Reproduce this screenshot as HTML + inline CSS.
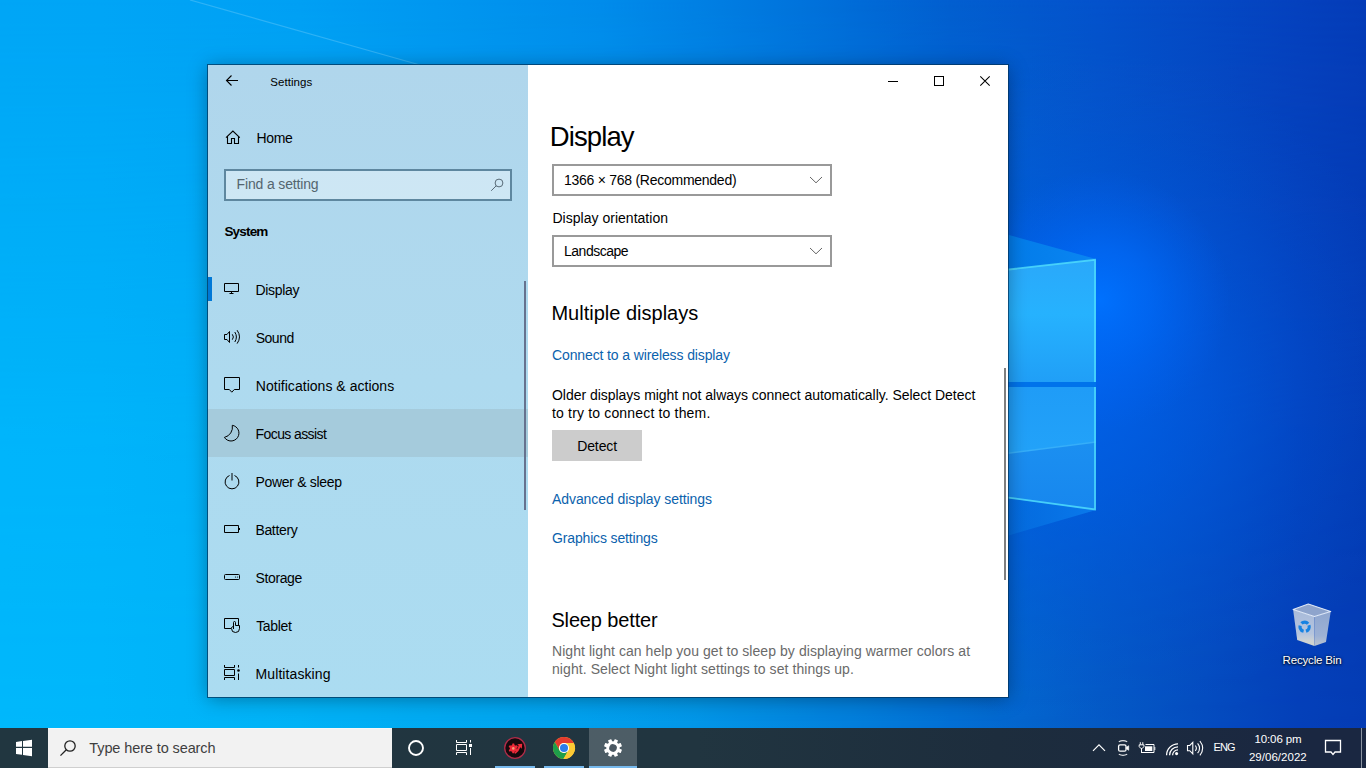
<!DOCTYPE html>
<html lang="en">
<head>
<meta charset="utf-8">
<title>Settings</title>
<style>
*{margin:0;padding:0;box-sizing:border-box}
html,body{width:1366px;height:768px;overflow:hidden;background:#0a6fd8;font-family:"Liberation Sans",sans-serif}
.abs{position:absolute}
.t{position:absolute;white-space:nowrap;display:block}
#wall{position:absolute;left:0;top:0;width:1366px;height:768px}
#win{position:absolute;left:208px;top:65px;width:800px;height:632px;background:#fff;box-shadow:0 0 0 1px rgba(0,50,90,.7),0 2px 18px rgba(0,0,0,.34)}
#side{position:absolute;left:0;top:0;width:320px;height:632px;background:linear-gradient(180deg,#b0d6ec 0%,#aedaef 50%,#abdcf1 100%)}
#hover{position:absolute;left:0;top:344px;width:320px;height:48px;background:#a5cbdc}
#accent{position:absolute;left:0;top:212px;width:4px;height:24px;background:#0078d7}
#sbox{position:absolute;left:16px;top:104px;width:288px;height:32px;border:2px solid #5e879f;background:rgba(255,255,255,.38)}
#sscroll{position:absolute;left:316px;top:216px;width:2px;height:229px;background:#66728e}
#mscroll{position:absolute;left:796px;top:303px;width:2px;height:212px;background:#7f7f7f}
.dd{position:absolute;left:344px;width:280px;height:32px;border:2px solid #999;background:#fff}
#detect{position:absolute;left:344px;top:365px;width:90px;height:31px;background:#ccc}
#taskbar{position:absolute;left:0;top:728px;width:1366px;height:40px;background:linear-gradient(90deg,#213640 0%,#213540 51%,#1d2d3d 73%,#1a2741 96%,#1a2741 100%)}
#tsearch{position:absolute;left:48px;top:0;width:344px;height:40px;background:#f2f2f2;border-top:1px solid #f7f7f7;border-bottom:1px solid #cfcfcf}
#active{position:absolute;left:589px;top:0;width:48px;height:40px;background:rgba(255,255,255,.2)}
.ind{position:absolute;top:38px;height:2px;background:#76b9ed}
svg{position:absolute;overflow:visible}
</style>
</head>
<body>
<!-- wallpaper -->
<svg id="wall" width="1366" height="768" viewBox="0 0 1366 768">
<defs>
<linearGradient id="gt" x1="0" y1="0" x2="1366" y2="0" gradientUnits="userSpaceOnUse">
<stop offset="0" stop-color="#00a6f6"/><stop offset=".073" stop-color="#00a5f6"/><stop offset=".22" stop-color="#00a0f4"/><stop offset=".44" stop-color="#008ceb"/><stop offset=".586" stop-color="#0073dc"/><stop offset=".695" stop-color="#025fd0"/><stop offset=".805" stop-color="#0452cc"/><stop offset=".95" stop-color="#0541be"/><stop offset="1" stop-color="#053cb8"/>
</linearGradient>
<linearGradient id="gbt" x1="0" y1="0" x2="1366" y2="0" gradientUnits="userSpaceOnUse">
<stop offset="0" stop-color="#00b8fb"/><stop offset=".073" stop-color="#00b7fb"/><stop offset=".22" stop-color="#00b2f6"/><stop offset=".4" stop-color="#01a4ee"/><stop offset=".512" stop-color="#0296e6"/><stop offset=".695" stop-color="#0270d4"/><stop offset=".805" stop-color="#045ac6"/><stop offset=".95" stop-color="#0440b9"/><stop offset="1" stop-color="#043cb4"/>
</linearGradient>
<linearGradient id="gvm" x1="0" y1="0" x2="0" y2="768" gradientUnits="userSpaceOnUse">
<stop offset="0" stop-color="#000"/><stop offset=".55" stop-color="#ccc"/><stop offset="1" stop-color="#fff"/>
</linearGradient>
<mask id="mk"><rect width="1366" height="768" fill="url(#gvm)"/></mask>
<radialGradient id="glow" cx="1080" cy="385" r="340" gradientUnits="userSpaceOnUse">
<stop offset="0" stop-color="#0062ec" stop-opacity=".9"/><stop offset=".35" stop-color="#005ce6" stop-opacity=".6"/><stop offset=".7" stop-color="#0056dc" stop-opacity=".25"/><stop offset="1" stop-color="#0452cc" stop-opacity="0"/>
</radialGradient>
<radialGradient id="glow2" cx="1100" cy="300" r="130" gradientUnits="userSpaceOnUse">
<stop offset="0" stop-color="#0072ff" stop-opacity=".95"/><stop offset=".4" stop-color="#006af8" stop-opacity=".7"/><stop offset="1" stop-color="#0060ee" stop-opacity="0"/>
</radialGradient>
<linearGradient id="p1" x1="0" y1="258" x2="0" y2="382" gradientUnits="userSpaceOnUse">
<stop offset="0" stop-color="#2aa8fa"/><stop offset=".45" stop-color="#26b2fe"/><stop offset="1" stop-color="#209ff7"/>
</linearGradient>
<linearGradient id="p2" x1="0" y1="387" x2="0" y2="450" gradientUnits="userSpaceOnUse">
<stop offset="0" stop-color="#1f9cf7"/><stop offset="1" stop-color="#22a2f9"/>
</linearGradient>
<linearGradient id="p3" x1="0" y1="445" x2="0" y2="510" gradientUnits="userSpaceOnUse">
<stop offset="0" stop-color="#1b8ff1"/><stop offset="1" stop-color="#1787ee"/>
</linearGradient>
<linearGradient id="bm1" x1="1096" y1="0" x2="1000" y2="0" gradientUnits="userSpaceOnUse">
<stop offset="0" stop-color="#0a86f2"/><stop offset="1" stop-color="#027ae8"/>
</linearGradient>
<linearGradient id="bm2" x1="1096" y1="0" x2="1000" y2="0" gradientUnits="userSpaceOnUse">
<stop offset="0" stop-color="#0a7aec"/><stop offset="1" stop-color="#0570e0" stop-opacity=".6"/>
</linearGradient>
</defs>
<rect width="1366" height="768" fill="url(#gt)"/>
<rect width="1366" height="768" fill="url(#gbt)" mask="url(#mk)"/>
<rect width="1366" height="768" fill="url(#glow)"/>
<rect width="1366" height="768" fill="url(#glow2)"/>
<!-- light beams -->
<polygon points="1000,232.500 1096,259 1000,271" fill="url(#bm1)"/>
<polygon points="1000,496 1096,510 1000,538" fill="url(#bm2)"/>
<!-- gap -->
<rect x="1000" y="381" width="96" height="7" fill="#0073eb"/>
<!-- panes -->
<polygon points="1000,270.500 1096,259.500 1096,382 1000,382" fill="url(#p1)"/>
<polygon points="1000,387 1096,387 1096,442 1000,454.300" fill="url(#p2)"/>
<polygon points="1000,454.300 1096,442 1096,510 1000,497" fill="url(#p3)"/>
<line x1="1000" y1="454.300" x2="1096" y2="442" stroke="#36aef9" stroke-width="1.500"/>
<polyline points="1000,270.500 1095,259.800 1095,382" fill="none" stroke="#4fdcfc" stroke-width="1.800" opacity=".85"/>
<polyline points="1095,387 1095,509.500 1000,496.500" fill="none" stroke="#4fdcfc" stroke-width="1.800" opacity=".85"/>
<line x1="190" y1="0" x2="420" y2="65" stroke="#5cc4f8" stroke-width="1.200" opacity=".5"/>
</svg>

<!-- recycle bin -->
<svg class="abs" style="left:1292px;top:603px" width="40" height="44" viewBox="0 0 40 44">
<defs><linearGradient id="rb" x1="0" y1="0" x2="0" y2="1"><stop offset="0" stop-color="#aebfdb"/><stop offset=".65" stop-color="#bccae0"/><stop offset=".85" stop-color="#d5d8d6"/><stop offset="1" stop-color="#dcdccb"/></linearGradient>
<linearGradient id="rb2" x1="0" y1="0" x2="0" y2="1"><stop offset="0" stop-color="#94aad0"/><stop offset=".7" stop-color="#a3b6d6"/><stop offset="1" stop-color="#c4cad0"/></linearGradient></defs>
<polygon points="1.100,6.500 16.300,1.100 38.700,8.500 22.400,13.600" fill="#8ea4cc"/>
<polygon points="1.100,6.500 22.400,13.600 22.400,43.100 5.200,37" fill="url(#rb)" opacity=".96"/>
<polygon points="22.400,13.600 38.700,8.500 34,39 22.400,43.100" fill="url(#rb2)" opacity=".96"/>
<polygon points="1.100,6.500 16.300,1.100 38.700,8.500 22.400,13.600" fill="none" stroke="#dfe8f6" stroke-width="1.100" stroke-linejoin="round"/>
<circle cx="12.600" cy="23.800" r="4.600" fill="none" stroke="#1682e2" stroke-width="3.200" stroke-dasharray="7.200 2.430" transform="rotate(-20 12.600 23.800)"/>
</svg>
<span class="t" style="left:1282.60px;top:651.82px;font-size:11.5px;line-height:16px;letter-spacing:-0.170px;color:#fff;text-shadow:0 1px 2px rgba(0,0,0,.9),0 0 3px rgba(0,0,0,.7);">Recycle Bin</span>

<!-- window -->
<div id="win">
 <div id="side">
  <div id="hover"></div>
  <div id="accent"></div>
  <div id="sbox"></div>
  <div id="sscroll"></div>
 </div>
 <div class="dd" style="top:99px"></div>
 <div class="dd" style="top:170px"></div>
 <div id="detect"></div>
 <div id="mscroll"></div>
</div>

<!-- window icons (page coordinates) -->
<svg class="abs" style="left:0;top:0" width="1366" height="768" viewBox="0 0 1366 768" fill="none" stroke="#000" stroke-width="1">
<!-- back arrow -->
<path d="M238 80.5H226.5M231.5 75.5l-5 5 5 5" stroke-width="1.1"/>
<!-- caption buttons -->
<path d="M888 81.5h10"/>
<rect x="934.5" y="76.5" width="9" height="9"/>
<path d="M980.3 76.3l9.4 9.4M989.7 76.3l-9.4 9.4" stroke-width="1.05"/>
<!-- home -->
<path d="M226 137.600L232.900 131l6.900 6.600M227.500 136.500v7h4v-5h3v5h4v-7" stroke-width="1.100"/>
<!-- search icon in box -->
<circle cx="499" cy="183" r="3.900" stroke="#586a76"/><path d="M496.200 185.800l-5 5" stroke="#586a76"/>
<!-- dropdown chevrons -->
<path d="M810 177l6 5.800 6-5.800" stroke="#666"/>
<path d="M810 248l6 5.800 6-5.800" stroke="#666"/>
<!-- Display icon -->
<path d="M224.500 283.500h14v8h-14zM229.500 293.500h4M231.500 291.500v2"/>
<!-- Sound icon -->
<path d="M224.500 334.500h2.500l2.500-3v11l-2.500-3h-2.500zM232.300 334.300q2.200 2.700 0 5.400M234.800 332q3.200 5 0 10M237.100 330.200q4.800 6.700 0 13.400"/>
<!-- Notifications icon -->
<path d="M224.500 377.500h15v12h-5.200l-2.500 2.700-2.500-2.700h-4.800z"/>
<!-- Focus assist icon (moon) -->
<path d="M232.300 425.300A7.900 7.900 0 1 1 224.400 437.400A10.500 10.500 0 0 0 232.300 425.300z"/>
<!-- Power icon -->
<path d="M232 473v7.500M229.500 475.500A6.900 6.900 0 1 0 234.500 475.500"/>
<!-- Battery icon -->
<path d="M224.500 525.500h14v7h-14z"/><rect x="238.500" y="528" width="1.500" height="2" fill="#000" stroke="none"/>
<!-- Storage icon -->
<rect x="224.500" y="574.500" width="15" height="5" rx="1"/><circle cx="235.500" cy="577" r=".6" fill="#000" stroke="none"/><circle cx="237.500" cy="577" r=".6" fill="#000" stroke="none"/>
<!-- Tablet icon -->
<path d="M231 628.500h-6.500v-10h14v6.500"/><path d="M233.500 629v-6.500a1 1 0 0 1 2 0v3h4v3a4 4 0 0 1-8 0v-1l2-1.300"/>
<!-- Multitasking icon -->
<path d="M224.500 665v2.500h10v-2.500M224.500 680v-2.500h10v2.500M224.500 669.500h10v6h-10z"/><path d="M238.500 665v2.500M238.500 673.500v6.500"/><circle cx="238.500" cy="670.500" r="1.300" fill="#000" stroke="none"/>
</svg>

<span class="t" style="left:270.30px;top:73.92px;font-size:11.5px;line-height:16px;letter-spacing:0.050px;color:#000;">Settings</span>
<span class="t" style="left:256.50px;top:127.85px;font-size:14px;line-height:20px;letter-spacing:-0.350px;color:#000;">Home</span>
<span class="t" style="left:236.60px;top:174.25px;font-size:14px;line-height:20px;letter-spacing:-0.158px;color:#54656f;">Find a setting</span>
<span class="t" style="left:224.40px;top:221.82px;font-size:13.5px;line-height:19px;letter-spacing:-0.810px;color:#000;font-weight:bold;">System</span>
<span class="t" style="left:255.60px;top:279.75px;font-size:14px;line-height:20px;letter-spacing:-0.350px;color:#000">Display</span>
<span class="t" style="left:255.80px;top:327.75px;font-size:14px;line-height:20px;letter-spacing:-0.525px;color:#000">Sound</span>
<span class="t" style="left:255.80px;top:375.75px;font-size:14px;line-height:20px;letter-spacing:0.030px;color:#000">Notifications &amp; actions</span>
<span class="t" style="left:255.60px;top:423.75px;font-size:14px;line-height:20px;letter-spacing:-0.600px;color:#000">Focus assist</span>
<span class="t" style="left:255.60px;top:471.75px;font-size:14px;line-height:20px;letter-spacing:-0.321px;color:#000">Power &amp; sleep</span>
<span class="t" style="left:255.40px;top:519.75px;font-size:14px;line-height:20px;letter-spacing:-0.325px;color:#000">Battery</span>
<span class="t" style="left:255.60px;top:567.75px;font-size:14px;line-height:20px;letter-spacing:-0.392px;color:#000">Storage</span>
<span class="t" style="left:256.20px;top:615.75px;font-size:14px;line-height:20px;letter-spacing:-0.330px;color:#000">Tablet</span>
<span class="t" style="left:255.60px;top:663.75px;font-size:14px;line-height:20px;letter-spacing:0.082px;color:#000">Multitasking</span>
<span class="t" style="left:549.80px;top:117.97px;font-size:27.5px;line-height:38px;letter-spacing:-0.892px;color:#000;">Display</span>
<span class="t" style="left:563.90px;top:169.95px;font-size:14px;line-height:20px;letter-spacing:-0.257px;color:#000;">1366 × 768 (Recommended)</span>
<span class="t" style="left:552.40px;top:208.05px;font-size:14px;line-height:20px;letter-spacing:0.025px;color:#000;">Display orientation</span>
<span class="t" style="left:564.00px;top:241.15px;font-size:14px;line-height:20px;letter-spacing:-0.487px;color:#000;">Landscape</span>
<span class="t" style="left:551.40px;top:299.37px;font-size:20px;line-height:28px;letter-spacing:0.009px;color:#000;">Multiple displays</span>
<span class="t" style="left:552.00px;top:345.05px;font-size:14px;line-height:20px;letter-spacing:-0.118px;color:#0b62ad;">Connect to a wireless display</span>
<span class="t" style="left:552.00px;top:385.25px;font-size:14px;line-height:20px;letter-spacing:-0.031px;color:#000;">Older displays might not always connect automatically. Select Detect</span>
<span class="t" style="left:552.00px;top:403.15px;font-size:14px;line-height:20px;letter-spacing:0.168px;color:#000;">to try to connect to them.</span>
<span class="t" style="left:577.20px;top:435.85px;font-size:14px;line-height:20px;letter-spacing:-0.110px;color:#000;">Detect</span>
<span class="t" style="left:552.00px;top:489.15px;font-size:14px;line-height:20px;letter-spacing:-0.077px;color:#0b62ad;">Advanced display settings</span>
<span class="t" style="left:552.00px;top:528.15px;font-size:14px;line-height:20px;letter-spacing:-0.153px;color:#0b62ad;">Graphics settings</span>
<span class="t" style="left:551.40px;top:606.07px;font-size:20px;line-height:28px;letter-spacing:-0.141px;color:#000;">Sleep better</span>
<span class="t" style="left:552.00px;top:641.35px;font-size:14px;line-height:20px;letter-spacing:0.061px;color:#6a6a6a;">Night light can help you get to sleep by displaying warmer colors at</span>
<span class="t" style="left:552.00px;top:658.55px;font-size:14px;line-height:20px;letter-spacing:0.074px;color:#6a6a6a;">night. Select Night light settings to set things up.</span>

<!-- taskbar -->
<div id="taskbar">
 <div id="tsearch"></div>
 <div id="active"></div>
 <div class="ind" style="left:495px;width:40px"></div>
 <div class="ind" style="left:544px;width:40px"></div>
 <div class="ind" style="left:589px;width:48px"></div>
</div>
<svg class="abs" style="left:0;top:0" width="1366" height="768" viewBox="0 0 1366 768" fill="none">
<!-- start logo -->
<path d="M16 742L22 741.100V746.800H16zM23 741L32 739.700V746.800H23zM16 748H22V754.800L16 754zM23 748H32V756.200L23 755z" fill="#fff"/>
<!-- search icon -->
<circle cx="70" cy="746" r="5.200" stroke="#222" stroke-width="1.300"/><path d="M66.300 749.800l-5.800 5.800" stroke="#222" stroke-width="1.300"/>
<!-- cortana -->
<circle cx="416" cy="748" r="7" stroke="#fff" stroke-width="1.900"/>
<!-- task view -->
<g stroke="#fff" stroke-width="1"><path d="M456.500 740v2.500h10v-2.500M456.500 755v-2.500h10v2.500M456.500 744.500h10v6h-10z"/><path d="M470.500 740v2.500M470.500 748v7"/><rect x="469" y="744" width="3" height="3" fill="#fff" stroke="none"/></g>
<!-- red app -->
<circle cx="515" cy="748" r="10.300" fill="#160a0e" stroke="#b22c48" stroke-width="1.300"/>
<g transform="translate(513.300 748.400)" fill="#ee2a38"><circle r="3.400"/><rect x="-1.100" y="-4.800" width="2.200" height="9.600" rx=".4"/><rect x="-1.100" y="-4.800" width="2.200" height="9.600" rx=".4" transform="rotate(60)"/><rect x="-1.100" y="-4.800" width="2.200" height="9.600" rx=".4" transform="rotate(120)"/><circle r="1.300" fill="#f59a78"/></g>
<path d="M517.300 744.200l4.900-.4-.4 4.900-1.500-1.500q-1.300 4.300-4.800 6.600l-1.300-.8q3.200-2.800 4.500-7.400z" fill="#ee2a38"/>
<!-- chrome -->
<g transform="translate(564 748)">
<circle r="11" fill="#fcc934"/>
<path id="chs" d="M0-5L9.800-5A11 11 0 0 0-9.230-5.990L-4.330 2.500A5 5 0 0 1 0-5z" fill="#e33b2e"/>
<path d="M0-5L9.800-5A11 11 0 0 0-9.230-5.990L-4.330 2.500A5 5 0 0 1 0-5z" fill="#1e9e4a" transform="rotate(-120)"/>
<path d="M0-5L9.800-5A11 11 0 0 0-9.230-5.990L-4.330 2.500A5 5 0 0 1 0-5z" fill="#fcc934" transform="rotate(120)"/>
<circle r="5.100" fill="#fff"/><circle r="4" fill="#2b7de9"/>
</g>
<!-- gear -->
<g transform="translate(613 748) rotate(22.500)"><g fill="#fff"><rect x="-1.800" y="-9" width="3.600" height="18" rx=".5"/><rect x="-1.800" y="-9" width="3.600" height="18" rx=".5" transform="rotate(45)"/><rect x="-1.800" y="-9" width="3.600" height="18" rx=".5" transform="rotate(90)"/><rect x="-1.800" y="-9" width="3.600" height="18" rx=".5" transform="rotate(135)"/><circle r="6.700"/></g><circle r="3.800" fill="#4a5862"/></g>
<!-- tray -->
<g stroke="#fff" stroke-width="1.200">
<path d="M1093 750.800l6-6 6 6"/>
<rect x="1118.600" y="744.800" width="7.400" height="6.400" rx="1.500" stroke-width="1.300"/><path d="M1126.300 747.300l2.400-1.600v4.600l-2.400-1.600z" fill="#fff" stroke-width=".6"/><path d="M1118.800 741.700q4.200-2.100 8.400 0M1118.800 754.300q4.200 2.100 8.400 0" stroke-width="1.100" opacity=".85"/>
<path d="M1140.300 742.200v2.300M1142.800 742.200v2.300M1139.200 744.800h4.700v1.800l-1.800 2h-1.100l-1.800-2zM1141.500 748.700v4.300M1145.500 744.500h8.500v8h-12.500" stroke-width="1"/><rect x="1145" y="746.300" width="7.300" height="4.700" fill="#fff" stroke="none"/><rect x="1154.400" y="747" width=".9" height="3" fill="#fff" stroke="none"/>
<path d="M1166.600 755.200a11.400 11.400 0 0 1 11.400-11.400M1169.600 755.200a8.400 8.400 0 0 1 8.400-8.400M1172.600 755.200a5.400 5.400 0 0 1 5.400-5.400" stroke-width="1.250"/><circle cx="1176.600" cy="753.600" r="1.550" fill="#fff" stroke="none"/>
<path d="M1187.500 745.500h2.300l3-3.100v11.400l-3-3.100h-2.300zM1195.300 745.500q2.200 2.700 0 5.400M1197.600 743.300q4 4.900 0 9.800M1199.900 741q5.600 7.200 0 14.400" stroke-width="1.100"/>
<path d="M1325.500 740.500h15v11.500h-5.500l-2 2.500-2-2.500h-5.500z" stroke-width="1.300"/>
</g>
<path d="M1361.500 728v40" stroke="#8a93a0" stroke-width="1"/>
</svg>
<span class="t" style="left:89.30px;top:738.38px;font-size:14.5px;line-height:20px;letter-spacing:-0.108px;color:#3f3f3f;">Type here to search</span>
<span class="t" style="left:1213.50px;top:740.09px;font-size:11px;line-height:15px;letter-spacing:-0.875px;color:#fff;">ENG</span>
<span class="t" style="left:1254.40px;top:730.92px;font-size:11.5px;line-height:16px;letter-spacing:-0.093px;color:#fff;">10:06 pm</span>
<span class="t" style="left:1248.90px;top:748.82px;font-size:11.5px;line-height:16px;letter-spacing:0.028px;color:#fff;">29/06/2022</span>
</body>
</html>
